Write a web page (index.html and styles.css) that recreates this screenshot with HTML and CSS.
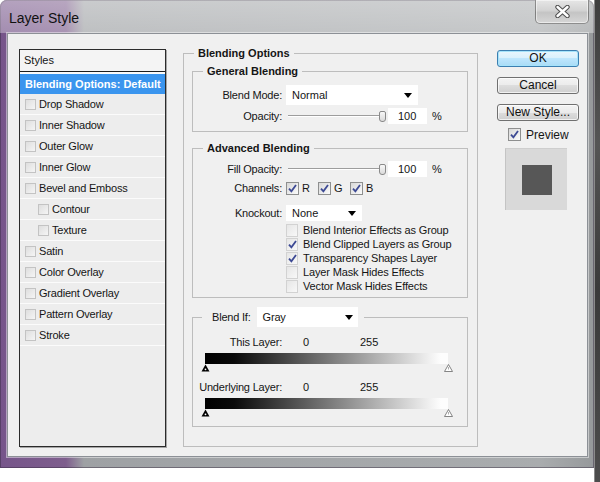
FILE: index.html
```html
<!DOCTYPE html>
<html>
<head>
<meta charset="utf-8">
<title>Layer Style</title>
<link rel="stylesheet" href="styles.css">
</head>
<body>
<div class="screen">
  <div class="window">
    <div class="titlebar">
      <span class="title">Layer Style</span>
      <div class="close">
        <svg width="15" height="13" viewBox="0 0 15 13"><path d="M2.5 2 L12.5 11 M12.5 2 L2.5 11" stroke="#4e4e4e" stroke-width="4.4" stroke-linecap="round"/><path d="M2.5 2 L12.5 11 M12.5 2 L2.5 11" stroke="#ffffff" stroke-width="2.4" stroke-linecap="round"/></svg>
      </div>
    </div>
    <div class="client">
      <div class="styles">
        <div class="styles-head">Styles</div>
        <div class="sel">Blending Options: Default</div>
        <div class="item"><span class="lcb"></span>Drop Shadow</div>
        <div class="item"><span class="lcb"></span>Inner Shadow</div>
        <div class="item"><span class="lcb"></span>Outer Glow</div>
        <div class="item"><span class="lcb"></span>Inner Glow</div>
        <div class="item"><span class="lcb"></span>Bevel and Emboss</div>
        <div class="item indent"><span class="lcb"></span>Contour</div>
        <div class="item indent"><span class="lcb"></span>Texture</div>
        <div class="item"><span class="lcb"></span>Satin</div>
        <div class="item"><span class="lcb"></span>Color Overlay</div>
        <div class="item"><span class="lcb"></span>Gradient Overlay</div>
        <div class="item"><span class="lcb"></span>Pattern Overlay</div>
        <div class="item"><span class="lcb"></span>Stroke</div>
      </div>

      <fieldset class="group">
        <legend class="glegend">Blending Options</legend>

        <fieldset class="box general">
          <legend class="slegend">General Blending</legend>
          <div class="row r-blend">
            <span class="lbl">Blend Mode:</span>
            <div class="select s-mode"><span>Normal</span><i class="arrow"></i></div>
          </div>
          <div class="row r-opacity">
            <span class="lbl">Opacity:</span>
            <div class="ctl">
              <div class="slider"><div class="track"></div><div class="thumb"></div></div>
              <div class="num">100</div><span class="pct">%</span>
            </div>
          </div>
        </fieldset>

        <fieldset class="box advanced">
          <legend class="slegend">Advanced Blending</legend>
          <div class="row r-fill">
            <span class="lbl">Fill Opacity:</span>
            <div class="ctl">
              <div class="slider"><div class="track"></div><div class="thumb"></div></div>
              <div class="num">100</div><span class="pct">%</span>
            </div>
          </div>
          <div class="row r-chan">
            <span class="lbl">Channels:</span>
            <div class="ctl">
              <span class="chan"><span class="cb"><svg width="9" height="9" viewBox="0 0 9 9"><path d="M1 4.6 L3.4 7.4 L8 1" fill="none" stroke="#3d4a94" stroke-width="1.8"/></svg></span>R</span>
              <span class="chan"><span class="cb"><svg width="9" height="9" viewBox="0 0 9 9"><path d="M1 4.6 L3.4 7.4 L8 1" fill="none" stroke="#3d4a94" stroke-width="1.8"/></svg></span>G</span>
              <span class="chan"><span class="cb"><svg width="9" height="9" viewBox="0 0 9 9"><path d="M1 4.6 L3.4 7.4 L8 1" fill="none" stroke="#3d4a94" stroke-width="1.8"/></svg></span>B</span>
            </div>
          </div>
          <div class="row r-knock">
            <span class="lbl">Knockout:</span>
            <div class="select s-knock"><span>None</span><i class="arrow"></i></div>
          </div>
          <div class="checks">
            <div class="check-row"><span class="cb soft"></span>Blend Interior Effects as Group</div>
            <div class="check-row"><span class="cb soft"><svg width="9" height="9" viewBox="0 0 9 9"><path d="M1 4.6 L3.4 7.4 L8 1" fill="none" stroke="#3d4a94" stroke-width="1.8"/></svg></span>Blend Clipped Layers as Group</div>
            <div class="check-row"><span class="cb soft"><svg width="9" height="9" viewBox="0 0 9 9"><path d="M1 4.6 L3.4 7.4 L8 1" fill="none" stroke="#3d4a94" stroke-width="1.8"/></svg></span>Transparency Shapes Layer</div>
            <div class="check-row"><span class="cb soft"></span>Layer Mask Hides Effects</div>
            <div class="check-row"><span class="cb soft"></span>Vector Mask Hides Effects</div>
          </div>
        </fieldset>

        <fieldset class="box blendif">
          <legend class="blegend"><span>Blend If:</span><div class="select s-gray"><span>Gray</span><i class="arrow"></i></div></legend>
          <div class="r-layer">
            <span class="lbl">This Layer:</span><span class="v0">0</span><span>255</span>
          </div>
          <div class="bar"></div>
          <div class="tris">
            <svg width="9" height="8" viewBox="0 0 9 8"><polygon points="4.5,0.5 8.5,7.5 0.5,7.5" fill="#000"/><circle cx="4.5" cy="5.3" r="0.9" fill="#fff"/></svg>
            <svg width="9" height="8" viewBox="0 0 9 8"><polygon points="4.5,0.5 8.5,7.5 0.5,7.5" fill="#fff" stroke="#777" stroke-width="0.9"/><line x1="4.5" y1="3" x2="4.5" y2="5.5" stroke="#999" stroke-width="0.8"/></svg>
          </div>
          <div class="r-layer r-under">
            <span class="lbl">Underlying Layer:</span><span class="v0">0</span><span>255</span>
          </div>
          <div class="bar"></div>
          <div class="tris">
            <svg width="9" height="8" viewBox="0 0 9 8"><polygon points="4.5,0.5 8.5,7.5 0.5,7.5" fill="#000"/><circle cx="4.5" cy="5.3" r="0.9" fill="#fff"/></svg>
            <svg width="9" height="8" viewBox="0 0 9 8"><polygon points="4.5,0.5 8.5,7.5 0.5,7.5" fill="#fff" stroke="#777" stroke-width="0.9"/><line x1="4.5" y1="3" x2="4.5" y2="5.5" stroke="#999" stroke-width="0.8"/></svg>
          </div>
        </fieldset>
      </fieldset>

      <div class="side">
        <div class="btn default">OK</div>
        <div class="btn">Cancel</div>
        <div class="btn">New Style...</div>
        <div class="preview"><span class="cb"><svg width="9" height="9" viewBox="0 0 9 9"><path d="M1 4.6 L3.4 7.4 L8 1" fill="none" stroke="#3d4a94" stroke-width="1.8"/></svg></span>Preview</div>
        <div class="swatch"><i></i></div>
      </div>
    </div>
  </div>
  <div class="edge"></div>
</div>
</body>
</html>
```

FILE: styles.css
```css
* { box-sizing: border-box; }
html, body { margin: 0; padding: 0; }
body {
  background: #fff;
  font-family: "Liberation Sans", Arial, sans-serif;
  font-size: 11px;
  color: #151515;
  width: 600px;
  height: 482px;
  overflow: hidden;
}
.screen { display: flex; height: 482px; align-items: flex-start; }

.window {
  width: 594px;
  height: 468px;
  border-radius: 7px 7px 0 0;
  background: linear-gradient(to right, #76558a 0, #7e5e8d 66px, #9ea1a4 84px, #a9acae 540px, #96999b 100%);
  display: flex;
  flex-direction: column;
  padding-bottom: 11px;
  box-shadow: inset 0 0 0 1px rgba(50, 40, 60, .45);
}
.titlebar {
  height: 33px;
  display: flex;
  justify-content: space-between;
  align-items: flex-start;
  border-radius: 7px 7px 0 0;
  background: linear-gradient(rgba(255,255,255,.45), rgba(255,255,255,.33));
}
.title {
  font-size: 14px;
  line-height: 16px;
  margin: 10px 0 0 9px;
  color: #111;
}
.close {
  width: 54px;
  height: 24px;
  margin-right: 5px;
  border: 1px solid rgba(70,70,70,.55);
  border-top: 0;
  border-radius: 0 0 5px 5px;
  background: linear-gradient(#e6e6e6, #d3d3d3 45%, #c4c4c4 55%, #d6d6d6);
  box-shadow: inset 0 0 0 1px rgba(255,255,255,.5);
  display: flex;
  align-items: center;
  justify-content: center;
}

.client {
  flex: 1;
  margin: 0 6px 0 7px;
  background: #f0f0f0;
  border: 1px solid #8c9096;
  box-shadow: 0 0 0 1px rgba(255,255,255,.45);
  display: flex;
  align-items: flex-start;
  padding: 13px 0 0 11px;
}

/* styles list */
.styles {
  width: 147px;
  height: 398px;
  margin-top: 2px;
  border: 1px solid #2b2b2b;
  background: #ededed;
  box-shadow: 1px 1px 0 #a6a6a6;
}
.styles-head {
  height: 22px;
  line-height: 21px;
  padding-left: 4px;
  border-bottom: 1px solid #1c1c1c;
  background: #f4f4f4;
}
.sel {
  height: 22px;
  border-top: 2px solid #fafafa;
  background: #3a95ee;
  background-clip: padding-box;
  color: #fff;
  font-weight: bold;
  line-height: 20px;
  padding-left: 5px;
}
.item {
  height: 21px;
  border-bottom: 1px solid #fbfbfb;
  display: flex;
  align-items: center;
  gap: 3px;
  padding-left: 5px;
  letter-spacing: -0.2px;
}
.item.indent { padding-left: 18px; }
.lcb {
  width: 11px;
  height: 11px;
  border: 1px solid #c3c3c3;
  background: linear-gradient(135deg, #dedede, #f5f5f5);
}

/* middle group */
.group {
  margin: 0 0 0 17px;
  padding: 5px 9px 0 8px;
  width: 295px;
  height: 400px;
  min-inline-size: 0;
  border: 1px solid #bdbdbd;
}
.glegend {
  padding: 0 4px;
  margin-left: 2px;
  font-weight: bold;
  line-height: 13px;
}
.box {
  margin: 0;
  padding: 0 0 5px 0;
  min-inline-size: 0;
  border: 1px solid #bdbdbd;
}
.slegend {
  padding: 0 4px;
  margin-left: 10px;
  font-weight: bold;
  line-height: 13px;
}
.advanced { margin-top: 10px; padding-bottom: 4px; }
.blendif { margin-top: 9px; padding-bottom: 9px; }

.row {
  display: grid;
  grid-template-columns: 89px auto;
  column-gap: 4px;
  align-items: center;
}
.lbl { text-align: right; letter-spacing: -0.2px; }
.ctl { display: flex; align-items: center; }

.r-blend { margin-top: 7px; height: 20px; }
.r-opacity { margin-top: 1px; height: 20px; }
.r-fill { margin-top: 5px; height: 18px; }
.r-chan { margin-top: 3px; height: 14px; }
.r-knock { margin-top: 10px; height: 16px; }

.select {
  display: flex;
  align-items: center;
  justify-content: space-between;
  background: #fff;
  padding: 0 6px;
  height: 20px;
  font-weight: normal;
}
.s-mode { width: 132px; }
.s-knock { width: 76px; height: 16px; }
.s-gray { width: 101px; padding-right: 5px; }
.arrow {
  width: 0;
  height: 0;
  border-left: 4px solid transparent;
  border-right: 4px solid transparent;
  border-top: 5px solid #000;
}

.slider { display: flex; align-items: center; width: 98px; margin-left: 2px; }
.track { flex: 1; height: 2px; border-top: 1px solid #9d9d9d; border-bottom: 1px solid #fff; }
.thumb {
  width: 7px;
  height: 11px;
  border: 1px solid #8a8a8a;
  border-radius: 2px 2px 3px 3px;
  background: linear-gradient(#f8f8f8, #dadada);
}
.num {
  width: 39px;
  height: 16px;
  margin-left: 2px;
  padding-left: 10px;
  line-height: 16px;
  background: #fff;
}
.pct { margin-left: 5px; }

.cb {
  width: 13px;
  height: 13px;
  border: 1px solid #8e8f8f;
  background: linear-gradient(135deg, #d8d8d8, #fbfbfb);
  display: flex;
  align-items: center;
  justify-content: center;
  flex: none;
}
.cb.soft {
  width: 12px;
  border-color: #d2d2d2;
  background: linear-gradient(135deg, #e6e6e6, #f8f8f8);
}
.chan { display: flex; align-items: center; gap: 3px; width: 32px; }

.checks { margin: 2px 0 0 93px; }
.check-row { height: 14px; display: flex; align-items: center; gap: 5px; letter-spacing: -0.15px; }

/* blend if */
.blegend {
  display: flex;
  align-items: center;
  gap: 6px;
  height: 20px;
  margin-left: 9px;
  padding: 0 6px 0 10px;
  letter-spacing: -0.2px;
}
.r-layer {
  margin-top: 9px;
  display: grid;
  grid-template-columns: 89px 78px auto;
  line-height: 13px;
}
.r-under { margin-top: 9px; }
.v0 { padding-left: 21px; }
.bar {
  margin: 4px 0 0 12px;
  width: 243px;
  height: 11px;
  background: linear-gradient(to right, #000 0%, #0a0a0a 12%, #fdfdfd 97%);
}
.tris {
  display: flex;
  justify-content: space-between;
  width: 252px;
  height: 8px;
  margin-left: 8px;
}
.tris svg { display: block; }

/* side column */
.side {
  width: 82px;
  margin: 3px 0 0 19px;
  display: flex;
  flex-direction: column;
}
.btn {
  height: 17px;
  border: 1px solid #707070;
  border-radius: 3px;
  background: linear-gradient(#f3f3f3 0, #ebebeb 50%, #dddddd 50%, #cfcfcf 100%);
  box-shadow: inset 0 0 0 1px rgba(255,255,255,.7);
  font-size: 12px;
  line-height: 15px;
  text-align: center;
  color: #111;
}
.btn + .btn { margin-top: 10px; }
.btn.default {
  border-color: #3c7fb1;
  background: linear-gradient(#e9f6fd 0, #d9f0fc 50%, #bee6fd 50%, #a9dbf6 100%);
  box-shadow: inset 0 0 0 1px #a6e3fa;
}
.preview {
  margin-top: 7px;
  height: 13px;
  padding-left: 11px;
  display: flex;
  align-items: center;
  gap: 5px;
  font-size: 12px;
}
.swatch {
  width: 62px;
  height: 62px;
  margin: 7px 0 0 8px;
  background: #d9d9d9;
  border-left: 1px solid #c4c4c4;
  border-top: 1px solid #cecece;
  display: flex;
  align-items: center;
  justify-content: center;
}
.swatch i { display: block; width: 30px; height: 30px; background: #575757; }

.edge {
  flex: 1;
  height: 482px;
  background: linear-gradient(#3e3e3e, #555 30%, #3a3a3a 60%, #4d4d4d);
  box-shadow: inset 1px 0 0 #8a8a8a;
}
```
